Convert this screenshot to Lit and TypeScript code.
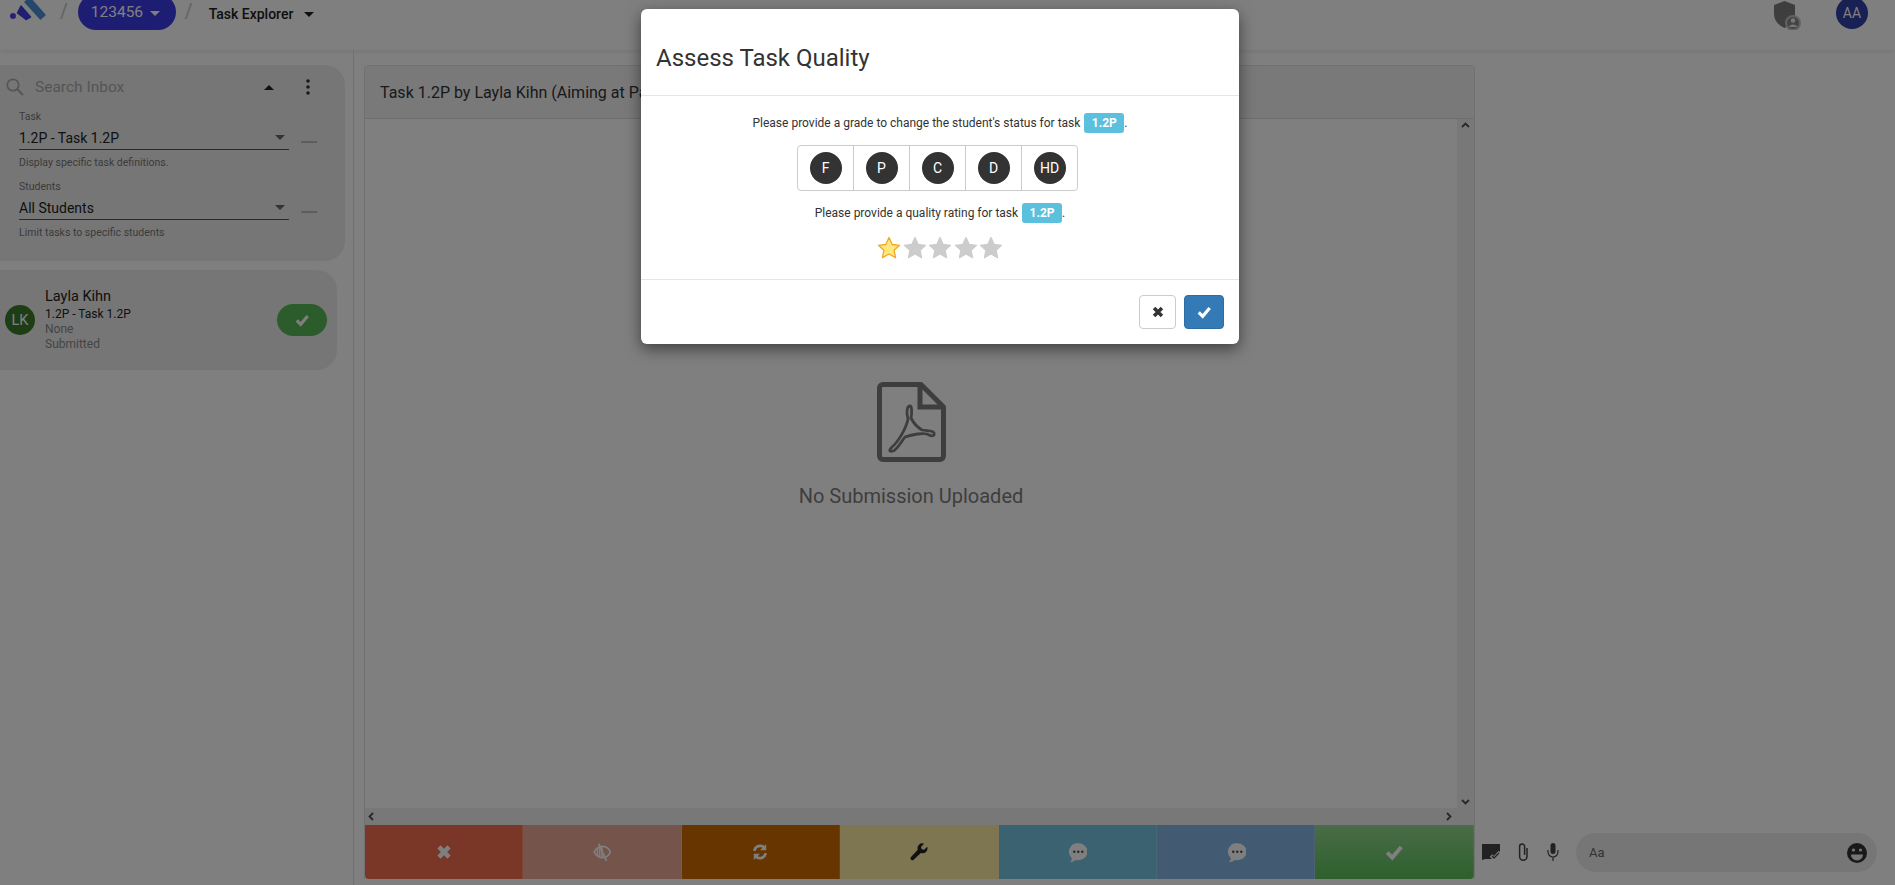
import { LitElement, html, css, svg } from "lit";
import { customElement } from "lit/decorators.js";

const caret = html`<svg class="caret" width="10" height="5" viewBox="0 0 10 5"><path d="M0 0h10L5 5z" fill="currentColor"/></svg>`;

const icons = {
  remove: svg`<path d="M3.500 3.500l9 9M12.500 3.500l-9 9" fill="none" stroke="currentColor" stroke-width="4"/>`,
  eye: svg`<path d="M1 8c2-3.500 5-5 7.500-5S14 4.500 15.500 8C14 11.500 11 13 8.500 13S3 11.500 1 8z" fill="none" stroke="currentColor" stroke-width="1.500"/><path d="M4 4.500v7M6 3.500v9M8 3v10" stroke="currentColor" stroke-width="1.300"/><path d="M5 0.500l7 15.500" stroke="currentColor" stroke-width="1.600"/>`,
  refresh: svg`<path d="M3 7a5.200 5.200 0 0 1 8.800-3" fill="none" stroke="currentColor" stroke-width="2.400"/><path d="M13.500 1v5.500H8z" fill="currentColor"/><path d="M13 9a5.200 5.200 0 0 1-8.800 3" fill="none" stroke="currentColor" stroke-width="2.400"/><path d="M2.500 15V9.500H8z" fill="currentColor"/>`,
  wrench: svg`<path d="M15.300 3.400l-2.700 2.700-2.200-.6-.6-2.200L12.500.6a4.300 4.300 0 0 0-5.600 5.400L.9 12.500a1.700 1.700 0 0 0 .1 2.300 1.700 1.700 0 0 0 2.300.1l6.300-6.100a4.300 4.300 0 0 0 5.700-5.400z" fill="currentColor"/>`,
  comment: svg`<path d="M9 1a7.500 6.800 0 0 1 0 13.600c-.8 0-1.500-.1-2.200-.3C5.500 15.600 4 16 2.500 16c.8-.9 1.300-1.900 1.400-3.100A6.800 6.800 0 0 1 9 1z" fill="currentColor"/><circle cx="5.800" cy="7.800" r="1" fill="var(--dot)"/><circle cx="9" cy="7.800" r="1" fill="var(--dot)"/><circle cx="12.200" cy="7.800" r="1" fill="var(--dot)"/>`,
  ok: svg`<path d="M2 8.500l4.500 4.500L14.500 3.500" fill="none" stroke="currentColor" stroke-width="3.600"/>`,
};

function icon(name: keyof typeof icons, size = 16) {
  return html`<svg width=${size} height=${size} viewBox="0 0 16 16">${icons[name]}</svg>`;
}

const actions: { cls: string; name: keyof typeof icons }[] = [
  { cls: "a-red", name: "remove" },
  { cls: "a-rose", name: "eye" },
  { cls: "a-orange", name: "refresh" },
  { cls: "a-sand", name: "wrench" },
  { cls: "a-teal", name: "comment" },
  { cls: "a-blue", name: "comment" },
  { cls: "a-green", name: "ok" },
];

@customElement("app-root")
export class AppRoot extends LitElement {
  static styles = css`
    :host {
      display: block;
      font-family: Roboto, "Liberation Sans", sans-serif;
      color: #212121;
    }
    .page {
      position: relative;
      width: 1895px;
      height: 885px;
      overflow: hidden;
      background: #fff;
    }

    /* top bar */
    .topbar {
      height: 50px;
      display: flex;
      align-items: flex-start;
      padding: 0 27px 0 10px;
      box-sizing: border-box;
      background: #fff;
      box-shadow: 0 2px 4px rgba(0, 0, 0, 0.08);
      overflow: hidden;
    }
    .slash {
      font-size: 20px;
      font-weight: 500;
      color: #ccc;
      margin: -1px 0 0 14px;
      line-height: 24px;
    }
    .unit {
      margin: -6px -5px 0 10px;
      width: 98px;
      height: 36px;
      border-radius: 18px;
      background: #3a3ae8;
      color: #fff;
      display: flex;
      align-items: center;
      padding-left: 13px;
      box-sizing: border-box;
      font-size: 15.500px;
      gap: 7px;
    }
    .unit .caret {
      margin-top: 3px;
    }
    .crumb {
      margin: 5px 0 0 16px;
      font-size: 14px;
      font-weight: 500;
      line-height: 18px;
      display: flex;
      align-items: center;
      gap: 11px;
    }
    .top-right {
      margin-left: auto;
      display: flex;
      align-items: flex-start;
      gap: 35px;
    }
    .avatar-top {
      margin-top: -3px;
      width: 32px;
      height: 32px;
      border-radius: 50%;
      background: #3040a8;
      color: #fff;
      font-size: 14px;
      display: flex;
      align-items: center;
      justify-content: center;
    }

    /* body */
    .body {
      display: flex;
      align-items: flex-start;
      height: 835px;
    }
    .side {
      width: 354px;
      height: 835px;
      box-sizing: border-box;
      border-right: 1px solid #e0e0e0;
      padding-top: 15px;
      flex: none;
    }
    .filters {
      width: 345px;
      height: 196px;
      box-sizing: border-box;
      background: #ededed;
      border-radius: 0 20px 20px 0;
      padding: 11px 0 0 6px;
    }
    .search {
      display: flex;
      align-items: center;
      height: 22px;
    }
    .search span {
      margin-left: 11px;
      font-size: 15.500px;
      color: #aaa;
      width: 229px;
    }
    .search .up {
      color: #222;
    }
    .search .kebab {
      margin-left: 32px;
    }
    .field {
      margin: 0 0 0 13px;
      display: grid;
      grid-template-columns: 270px 16px;
      column-gap: 12px;
      align-items: center;
    }
    .field.first {
      margin-top: 12px;
    }
    .field.second {
      margin-top: 10px;
    }
    .field label {
      grid-column: 1 / 3;
      font-size: 10.500px;
      line-height: 14px;
      color: #777;
    }
    .select {
      display: flex;
      align-items: center;
      justify-content: space-between;
      height: 26px;
      padding: 2px 4px 0 0;
      box-sizing: border-box;
      border-bottom: 1px solid #555;
      font-size: 14px;
      color: #222;
    }
    .select .caret {
      color: #666;
    }
    .dash {
      height: 2px;
      background: #bbb;
      margin-top: 10px;
    }
    .hint {
      grid-column: 1 / 3;
      font-size: 10.500px;
      line-height: 14px;
      margin-top: 6px;
      color: #777;
    }
    .inbox-card {
      margin-top: 9px;
      width: 337px;
      height: 100px;
      box-sizing: border-box;
      background: #ededed;
      border-radius: 0 20px 20px 0;
      padding: 0 10px 0 5px;
      display: flex;
      align-items: center;
    }
    .lk {
      width: 30px;
      height: 30px;
      border-radius: 50%;
      background: #3c7a28;
      color: #fff;
      font-size: 14.500px;
      display: flex;
      align-items: center;
      justify-content: center;
      flex: none;
    }
    .who {
      margin-left: 10px;
      flex: 1;
      font-size: 12px;
      line-height: 15px;
      color: #888;
    }
    .who .name {
      font-size: 14.500px;
      line-height: 18px;
      color: #222;
      margin-bottom: 1px;
    }
    .who .task {
      color: #222;
    }
    .ok-pill {
      width: 50px;
      height: 32px;
      border-radius: 16px;
      background: #58b858;
      color: #fff;
      display: flex;
      align-items: center;
      justify-content: center;
    }

    /* viewer */
    .viewer {
      margin: 15px 0 0 10px;
      width: 1111px;
      height: 814px;
      box-sizing: border-box;
      border: 1px solid #e0e0e0;
      border-bottom: none;
      border-radius: 4px 4px 0 0;
      display: flex;
      flex-direction: column;
      flex: none;
    }
    .viewer-head {
      height: 53px;
      box-sizing: border-box;
      border-bottom: 1px solid #ddd;
      background: #f2f2f2;
      padding: 18px 0 0 15px;
      font-size: 16px;
      line-height: 18px;
      color: #333;
      flex: none;
    }
    .viewer-main {
      flex: 1;
      display: grid;
      grid-template-columns: 1fr 17px;
      grid-template-rows: 1fr 17px;
      min-height: 0;
    }
    .doc {
      display: flex;
      flex-direction: column;
      align-items: center;
      padding-top: 263px;
      color: #7c7c7c;
    }
    .doc p {
      margin: 22px 0 0;
      font-size: 20px;
      line-height: 24px;
    }
    .vbar {
      background: #f1f1f1;
      display: flex;
      flex-direction: column;
      align-items: center;
      justify-content: space-between;
      padding: 3px 0;
      box-sizing: border-box;
      color: #505050;
    }
    .hbar {
      grid-column: 1 / 3;
      background: #f1f1f1;
      display: flex;
      align-items: center;
      justify-content: space-between;
      padding: 0 22px 0 3px;
      color: #505050;
    }
    .actions {
      height: 54px;
      display: grid;
      grid-template-columns: repeat(6, 158.400px) 1fr;
      flex: none;
      border-radius: 0 0 4px 4px;
      overflow: hidden;
    }
    .actions div {
      display: flex;
      align-items: center;
      justify-content: center;
      color: #fff;
      --dot: #555;
      border-right: 1px solid rgba(255, 255, 255, 0.2);
    }
    .a-red { background: #f46c4c; }
    .a-rose { background: #e8a896; }
    .a-orange { background: #cc6a00; }
    .actions .a-sand { background: #faeca2; color: #222; }
    .a-teal { background: #74c4e2; }
    .a-blue { background: #84b4e4; }
    .a-green { background: linear-gradient(#94d890, #5cc05a); }

    /* chat */
    .chat {
      flex: 1;
      height: 835px;
      display: flex;
      align-items: flex-end;
      padding: 0 18px 13px 7px;
      box-sizing: border-box;
    }
    .chat-icons {
      display: flex;
      align-items: center;
      gap: 18px;
      height: 39px;
      color: #444;
      padding-bottom: 2px;
      box-sizing: border-box;
    }
    .chat-input {
      margin-left: 17px;
      flex: 1;
      height: 39px;
      border-radius: 20px;
      background: #ededed;
      display: flex;
      align-items: center;
      justify-content: space-between;
      padding: 0 10px 0 13px;
      font-size: 13px;
      color: #666;
    }

    /* dialog */
    .overlay {
      position: absolute;
      inset: 0;
      background: rgba(0, 0, 0, 0.5);
      padding-right: 15px;
      display: flex;
      justify-content: center;
      align-items: flex-start;
    }
    .modal {
      margin-top: 9px;
      width: 598px;
      background: #fff;
      border-radius: 6px;
      box-shadow: 0 5px 15px rgba(0, 0, 0, 0.5);
      color: #333;
    }
    .modal-head {
      padding: 32px 15px 20px;
      border-bottom: 1px solid #e5e5e5;
    }
    .modal-head h3 {
      margin: 0;
      font-size: 24px;
      font-weight: 400;
      line-height: 34px;
    }
    .modal-body {
      padding: 17px 15px 18px;
      border-bottom: 1px solid #e5e5e5;
      display: flex;
      flex-direction: column;
      align-items: center;
    }
    .modal-body p {
      margin: 0;
      font-size: 12px;
      line-height: 21px;
    }
    .modal-body p.rate {
      margin-top: 12px;
    }
    .label {
      display: inline-block;
      background: #5bc0de;
      color: #fff;
      font-size: 12px;
      font-weight: 700;
      line-height: 20px;
      padding: 0 7.500px;
      border-radius: 3px;
      margin-left: 1px;
    }
    .grades {
      margin: 11px 5px 0 0;
      display: flex;
      border: 1px solid #ccc;
      border-radius: 4px;
      height: 46px;
      box-sizing: border-box;
    }
    .grades div {
      width: 55px;
      display: flex;
      align-items: center;
      justify-content: center;
      border-left: 1px solid #ccc;
    }
    .grades div:first-child {
      border-left: none;
    }
    .grades span {
      width: 32px;
      height: 32px;
      border-radius: 50%;
      background: #333;
      color: #fff;
      font-size: 14px;
      display: flex;
      align-items: center;
      justify-content: center;
    }
    .stars {
      margin: 11px 0 0 2px;
      display: flex;
      height: 26px;
      align-items: center;
    }
    .stars svg {
      margin-right: 1.500px;
    }
    .modal-foot {
      padding: 15px;
      display: flex;
      justify-content: flex-end;
      gap: 8px;
    }
    .btn {
      height: 34px;
      box-sizing: border-box;
      border-radius: 4px;
      border: 1px solid #ccc;
      display: flex;
      align-items: center;
      justify-content: center;
      width: 37px;
      background: #fff;
      color: #333;
    }
    .btn.primary {
      width: 40px;
      background: #337ab7;
      border-color: #2e6da4;
      color: #fff;
    }
  `;

  private star(on: boolean) {
    return html`<svg width="24" height="24" viewBox="0 0 24 24">
      <path
        d="M12 1.500l3.200 7 7.300.8-5.400 5 1.500 7.500L12 18l-6.600 3.800 1.500-7.500-5.400-5 7.300-.8z"
        fill=${on ? "#ffe97f" : "#ccc"}
        stroke=${on ? "#f5a623" : "#ccc"}
        stroke-width="1.300"
        stroke-linejoin="round"
      />
    </svg>`;
  }

  private field(cls: string, label: string, value: string, hint: string) {
    return html`<div class="field ${cls}">
      <label>${label}</label>
      <div class="select">${value} ${caret}</div>
      <div class="dash"></div>
      <div class="hint">${hint}</div>
    </div>`;
  }

  render() {
    return html`
      <div class="page">
        <header class="topbar">
          <svg width="36" height="21" viewBox="0 0 36 21">
            <circle cx="3" cy="16" r="3" fill="#5a40e0" />
            <path d="M7.500 13L11 6l9.500 11-4.500 2.500z" fill="#4040e0" stroke="#4040e0" stroke-width="1.500" stroke-linejoin="round" />
            <path d="M15 2l5-4 15 17-4.500 4z" fill="#4a90d8" stroke="#4a90d8" stroke-width="1.500" stroke-linejoin="round" />
          </svg>
          <span class="slash">/</span>
          <div class="unit">123456 ${caret}</div>
          <span class="slash">/</span>
          <div class="crumb">Task Explorer ${caret}</div>
          <div class="top-right">
            <svg width="28" height="30" viewBox="0 0 28 30">
              <path d="M11.500 1L22 5v9c0 6-4.500 11-10.500 14C5 25 1 20 1 14V5z" fill="#7c7c7c" />
              <circle cx="20" cy="23" r="7" fill="#888" stroke="#c4c4c4" stroke-width="2" />
              <circle cx="20" cy="20.500" r="2.200" fill="#eee" />
              <path d="M16 27c0-3.500 8-3.500 8 0z" fill="#eee" />
            </svg>
            <div class="avatar-top">AA</div>
          </div>
        </header>

        <div class="body">
          <aside class="side">
            <div class="filters">
              <div class="search">
                <svg width="18" height="18" viewBox="0 0 18 18">
                  <circle cx="7" cy="7" r="5.700" fill="none" stroke="#aaa" stroke-width="1.700" />
                  <path d="M11 11l6 6" stroke="#aaa" stroke-width="2" />
                </svg>
                <span>Search Inbox</span>
                <svg class="up" width="10" height="5" viewBox="0 0 10 5"><path d="M0 5h10L5 0z" fill="currentColor" /></svg>
                <svg class="kebab" width="4" height="16" viewBox="0 0 4 16">
                  <circle cx="2" cy="2" r="1.800" fill="#333" />
                  <circle cx="2" cy="8" r="1.800" fill="#333" />
                  <circle cx="2" cy="14" r="1.800" fill="#333" />
                </svg>
              </div>
              ${this.field("first", "Task", "1.2P - Task 1.2P", "Display specific task definitions.")}
              ${this.field("second", "Students", "All Students", "Limit tasks to specific students")}
            </div>
            <div class="inbox-card">
              <div class="lk">LK</div>
              <div class="who">
                <div class="name">Layla Kihn</div>
                <div class="task">1.2P - Task 1.2P</div>
                <div>None</div>
                <div>Submitted</div>
              </div>
              <div class="ok-pill">${icon("ok", 14)}</div>
            </div>
          </aside>

          <section class="viewer">
            <div class="viewer-head">Task 1.2P by Layla Kihn (Aiming at Pass)</div>
            <div class="viewer-main">
              <div class="doc">
                <svg width="69" height="80" viewBox="0 0 69 80">
                  <path
                    d="M6 2.500h38l22.500 22.500V74a3.500 3.500 0 0 1-3.500 3.500H6A3.500 3.500 0 0 1 2.500 74V6A3.500 3.500 0 0 1 6 2.500z"
                    fill="none"
                    stroke="currentColor"
                    stroke-width="5"
                    stroke-linejoin="round"
                  />
                  <path d="M43 3v22h23" fill="none" stroke="currentColor" stroke-width="5" />
                  <path
                    d="M33 24C30 24 29 30 31 37C29 47 21 60 15 65C11 69 13 70 16 69C20 68 24 60 28 55C36 52 46 51 50 52C55 55 58 54 57 51C56 48 50 49 45 48C40 45 36 40 34 36C35 31 35 24 33 24Z"
                    fill="none"
                    stroke="currentColor"
                    stroke-width="2.800"
                  />
                </svg>
                <p>No Submission Uploaded</p>
              </div>
              <div class="vbar">
                <svg width="9" height="6" viewBox="0 0 9 6"><path d="M1 5l3.500-3.500L8 5" fill="none" stroke="currentColor" stroke-width="1.800" /></svg>
                <svg width="9" height="6" viewBox="0 0 9 6"><path d="M1 1l3.500 3.500L8 1" fill="none" stroke="currentColor" stroke-width="1.800" /></svg>
              </div>
              <div class="hbar">
                <svg width="6" height="9" viewBox="0 0 6 9"><path d="M5 1L1.500 4.500 5 8" fill="none" stroke="currentColor" stroke-width="1.800" /></svg>
                <svg width="6" height="9" viewBox="0 0 6 9"><path d="M1 1l3.500 3.500L1 8" fill="none" stroke="currentColor" stroke-width="1.800" /></svg>
              </div>
            </div>
            <div class="actions">
              ${actions.map((a) => html`<div class=${a.cls}>${icon(a.name, a.name === "comment" ? 20 : 18)}</div>`)}
            </div>
          </section>

          <div class="chat">
            <div class="chat-icons">
              <svg width="18" height="16" viewBox="0 0 18 16">
                <path d="M0 0h18v9l-5 6H5c-2 0-3 .3-5 1z" fill="currentColor" />
                <path d="M9 11.500l3 3L18 8" fill="none" stroke="#fff" stroke-width="3.500" />
                <path d="M10 12l2 2L17 9" fill="none" stroke="currentColor" stroke-width="1.300" />
              </svg>
              <svg width="11" height="18" viewBox="0 0 11 18">
                <path d="M9 5v8.500a3.700 3.700 0 0 1-7.400 0V3.500a2.500 2.500 0 0 1 5 0V12" fill="none" stroke="currentColor" stroke-width="1.500" />
              </svg>
              <svg width="12" height="18" viewBox="0 0 12 18">
                <rect x="3.500" y="0" width="5" height="11" rx="2.500" fill="currentColor" />
                <path d="M1 7v2a5 5 0 0 0 10 0V7M6 14v4" fill="none" stroke="currentColor" stroke-width="1.200" />
              </svg>
            </div>
            <div class="chat-input">
              <span>Aa</span>
              <svg width="20" height="20" viewBox="0 0 20 20">
                <circle cx="10" cy="10" r="10" fill="#333" />
                <circle cx="6.500" cy="7" r="1.600" fill="#ededed" />
                <circle cx="13.500" cy="7" r="1.600" fill="#ededed" />
                <path d="M4 11.500h12a6 6 0 0 1-12 0z" fill="#ededed" />
              </svg>
            </div>
          </div>
        </div>

        <div class="overlay">
          <div class="modal">
            <div class="modal-head"><h3>Assess Task Quality</h3></div>
            <div class="modal-body">
              <p>Please provide a grade to change the student's status for task <span class="label">1.2P</span>.</p>
              <div class="grades">
                ${["F", "P", "C", "D", "HD"].map((g) => html`<div><span>${g}</span></div>`)}
              </div>
              <p class="rate">Please provide a quality rating for task <span class="label">1.2P</span>.</p>
              <div class="stars">${[true, false, false, false, false].map((on) => this.star(on))}</div>
            </div>
            <div class="modal-foot">
              <div class="btn">${icon("remove", 14)}</div>
              <div class="btn primary">${icon("ok", 14)}</div>
            </div>
          </div>
        </div>
      </div>
    `;
  }
}
